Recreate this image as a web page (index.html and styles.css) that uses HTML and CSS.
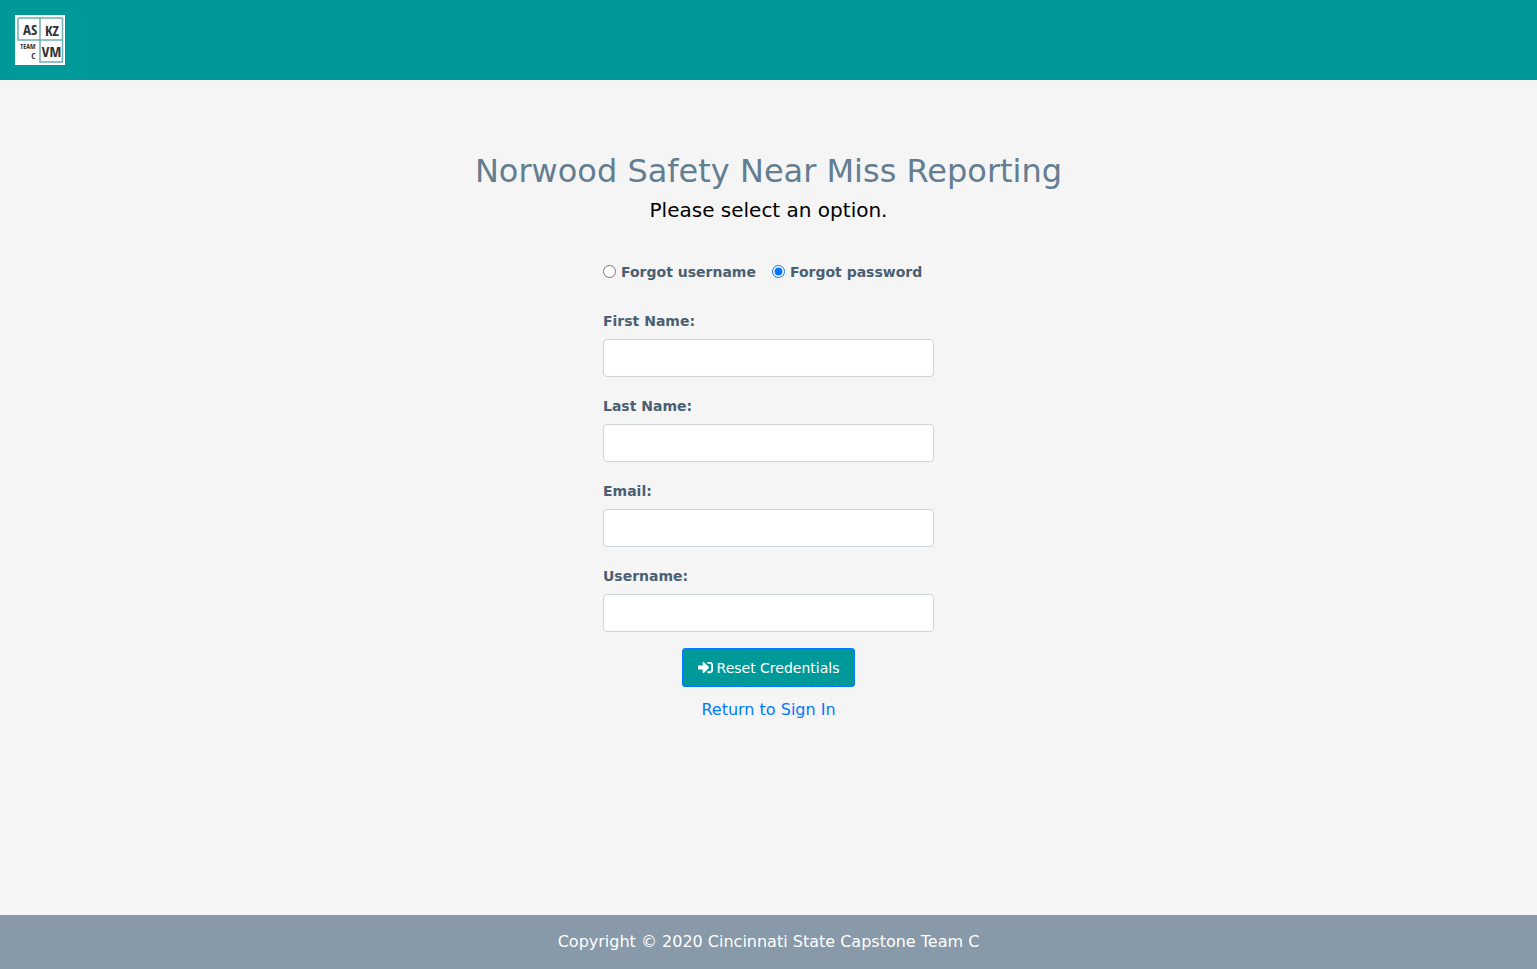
FILE: index.html
```html
<!DOCTYPE html>
<html lang="en">
<head>
<meta charset="utf-8">
<title>Norwood Safety Near Miss Reporting</title>
<link rel="stylesheet" href="styles.css">
</head>
<body>
<header class="topbar">
  <a class="brand" href="#" aria-label="Team C home">
    <svg class="logo" viewBox="0 0 50 50" role="img" aria-label="Team C logo">
      <rect width="50" height="50" fill="#fff"/>
      <path d="M4 3h43.500v44h-22.500v-44M4 3a1 1 0 0 0-1 1v21h44.500" fill="none" stroke="#6fb0ae" stroke-width="1.500"/>
      <g class="logo-text">
        <text x="15" y="20" text-anchor="middle" font-size="15">AS</text>
        <text x="37" y="21" text-anchor="middle" font-size="15">KZ</text>
        <text x="36.500" y="42" text-anchor="middle" font-size="15">VM</text>
        <text class="logo-small" x="20.500" y="34" text-anchor="end" font-size="7">TEAM</text>
        <text class="logo-small" x="20.500" y="44" text-anchor="end" font-size="9">C</text>
      </g>
    </svg>
  </a>
</header>
<main class="content">
  <h1 class="title">Norwood Safety Near Miss Reporting</h1>
  <p class="subtitle">Please select an option.</p>
  <form class="form">
    <div class="options">
      <span class="option"><input class="radio" type="radio" name="opt" id="fu"><label class="label" for="fu">Forgot username</label></span>
      <span class="option"><input class="radio" type="radio" name="opt" id="fp" checked><label class="label" for="fp">Forgot password</label></span>
    </div>
    <div class="field"><label class="label" for="first">First Name:</label><input class="input" type="text" id="first"></div>
    <div class="field"><label class="label" for="last">Last Name:</label><input class="input" type="text" id="last"></div>
    <div class="field"><label class="label" for="email">Email:</label><input class="input" type="email" id="email"></div>
    <div class="field"><label class="label" for="user">Username:</label><input class="input" type="text" id="user"></div>
    <button class="submit" type="button">
      <svg class="submit-icon" viewBox="0 0 512 512" aria-hidden="true"><path fill="currentColor" d="M416 448h-84c-6.600 0-12-5.400-12-12v-40c0-6.600 5.400-12 12-12h84c17.700 0 32-14.300 32-32V160c0-17.700-14.300-32-32-32h-84c-6.600 0-12-5.400-12-12V76c0-6.600 5.400-12 12-12h84c53 0 96 43 96 96v192c0 53-43 96-96 96zm-47-209L201 71c-15-15-41-4.500-41 17v96H24c-13.300 0-24 10.700-24 24v96c0 13.300 10.700 24 24 24h136v96c0 21.500 26 32 41 17l168-168c9.300-9.400 9.300-24.600 0-34z"/></svg>
      <span>Reset Credentials</span>
    </button>
    <a class="return" href="#">Return to Sign In</a>
  </form>
</main>
<footer class="footer">Copyright © 2020 Cincinnati State Capstone Team C</footer>
</body>
</html>
```

FILE: styles.css
```css
* { box-sizing: border-box; }
body {
  margin: 0;
  min-height: 100vh;
  display: flex;
  flex-direction: column;
  background: #f5f5f5;
  color: #000;
  font: 16px/24px Verdana, "DejaVu Sans", sans-serif;
}
.topbar { display: flex; align-items: center; padding: 15px; background: #009999; }
.brand { display: block; height: 50px; }
.logo { display: block; width: 50px; height: 50px; }
.logo-text { font-family: "Open Sans Condensed", "Liberation Sans Narrow", sans-serif; font-weight: 700; fill: #333; }
.logo-small { font-weight: 400; }
.content { flex: 1; display: flex; flex-direction: column; align-items: center; padding: 71px 16px 32px; }
.title { margin: 0; font-size: 32px; line-height: 40px; font-weight: 400; color: #647d90; text-align: center; }
.subtitle { margin: 4px 0 0; font-size: 20px; line-height: 30px; text-align: center; }
.form { display: flex; flex-direction: column; width: 100%; max-width: 331px; margin-top: 35px; }
.options { display: flex; gap: 16px; margin-bottom: 25px; white-space: nowrap; }
.option { display: flex; align-items: center; gap: 5px; }
.radio { width: 13px; height: 13px; margin: 0 0 2px; accent-color: #0075ff; }
.label { font-size: 14px; line-height: 24px; font-weight: 700; color: #4a6072; }
.field { display: flex; flex-direction: column; gap: 6px; margin-bottom: 17px; }
.field:last-of-type { margin-bottom: 16px; }
.input { width: 100%; height: 38px; padding: 6px 12px; border: 1px solid #ced4da; border-radius: 4px; background: #fff; font: inherit; }
.submit { display: flex; align-items: center; align-self: center; gap: 4px; height: 39px; padding: 0 15px; border: 1px solid #007bff; border-radius: 3px; background: #009999; color: #fff; font: 14px/24px Verdana, "DejaVu Sans", sans-serif; white-space: nowrap; }
.submit-icon { width: 15px; height: 15px; }
.return { align-self: center; margin-top: 11px; color: #007bff; text-decoration: none; }
.footer { padding: 15px; background: #8899a9; color: #fff; text-align: center; }
```
